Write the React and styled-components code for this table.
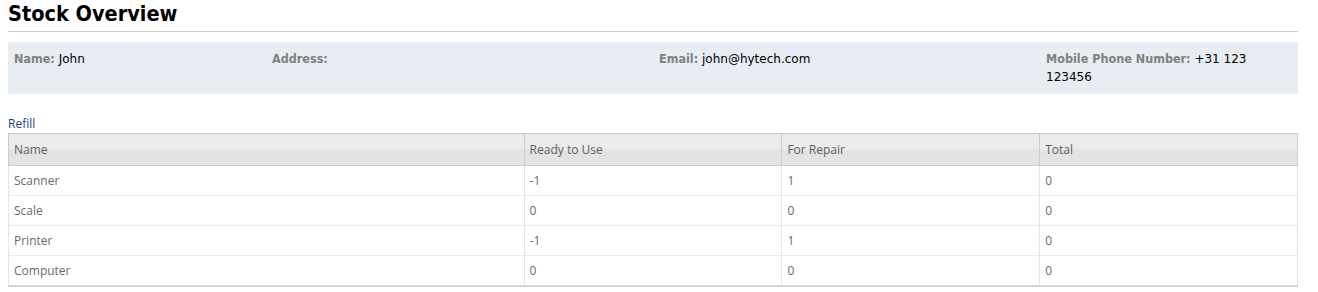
import styled, { createGlobalStyle } from 'styled-components';

const GlobalStyle = createGlobalStyle`
  body {
    margin: 0;
    background: #ffffff;
    font-family: "DejaVu Sans", Verdana, sans-serif;
  }
`;

const Page = styled.div`
  padding: 0 20px 8px 8px;
`;

const Title = styled.h1`
  margin: 0;
  padding-bottom: 4px;
  border-bottom: 1px solid #cccccc;
  font-family: "DejaVu Sans Condensed", "DejaVu Sans", sans-serif;
  font-stretch: condensed;
  font-weight: bold;
  font-size: 21.5px;
  line-height: 27px;
  color: #000000;
`;

const InfoPanel = styled.div`
  margin-top: 10px;
  display: grid;
  grid-template-columns: 20% 30% 30% 20%;
  background: #e8ecf3;
  padding: 8px 0;
  font-size: 12px;
  line-height: 18px;
`;

const InfoCell = styled.div`
  padding: 0 6px;
  color: #000000;
`;

const Label = styled.span`
  color: #808080;
  font-weight: bold;
  font-family: "DejaVu Sans Condensed", "DejaVu Sans", sans-serif;
  font-stretch: condensed;
  font-size: 12.5px;
`;

const RefillLink = styled.a`
  display: block;
  margin-top: 20px;
  font-family: "Open Sans", sans-serif;
  font-size: 12px;
  line-height: 19px;
  color: #1f3c88;
  text-decoration: none;
`;

const Table = styled.table`
  width: 100%;
  border-collapse: collapse;
  font-family: "Open Sans", sans-serif;
  font-size: 12px;
  color: #6a6a6a;
  border-left: 1px solid #dddddd;
  border-right: 1px solid #dddddd;
  border-bottom: 2px solid #d4d4d4;
`;

const HeadCell = styled.th`
  width: ${(props) => props.w};
  height: 31px;
  padding: 0 5px;
  text-align: left;
  font-weight: normal;
  color: #5f5f5f;
  background: linear-gradient(#ececec 0%, #ececec 45%, #e1e1e1 55%, #e6e6e6 100%);
  border: 1px solid #cccccc;
`;

const Cell = styled.td`
  height: 29px;
  padding: 0 5px;
  color: #6a6a6a;
  border-top: 1px solid #e9ebee;
  border-left: 1px solid #e6e6e6;
  border-right: 1px solid #e6e6e6;
`;

const stock = [
  { name: 'Scanner', ready: -1, repair: 1, total: 0 },
  { name: 'Scale', ready: 0, repair: 0, total: 0 },
  { name: 'Printer', ready: -1, repair: 1, total: 0 },
  { name: 'Computer', ready: 0, repair: 0, total: 0 },
];

export default function App() {
  return (
    <Page>
      <GlobalStyle />
      <Title>Stock Overview</Title>
      <InfoPanel>
        <InfoCell>
          <Label>Name:</Label> John
        </InfoCell>
        <InfoCell>
          <Label>Address:</Label>
        </InfoCell>
        <InfoCell>
          <Label>Email:</Label> john@hytech.com
        </InfoCell>
        <InfoCell>
          <Label>Mobile Phone Number:</Label> +31 123 123456
        </InfoCell>
      </InfoPanel>
      <RefillLink href="#">Refill</RefillLink>
      <Table>
        <thead>
          <tr>
            <HeadCell w="40%">Name</HeadCell>
            <HeadCell w="20%">Ready to Use</HeadCell>
            <HeadCell w="20%">For Repair</HeadCell>
            <HeadCell w="20%">Total</HeadCell>
          </tr>
        </thead>
        <tbody>
          {stock.map((item) => (
            <tr key={item.name}>
              <Cell>{item.name}</Cell>
              <Cell>{item.ready}</Cell>
              <Cell>{item.repair}</Cell>
              <Cell>{item.total}</Cell>
            </tr>
          ))}
        </tbody>
      </Table>
    </Page>
  );
}
